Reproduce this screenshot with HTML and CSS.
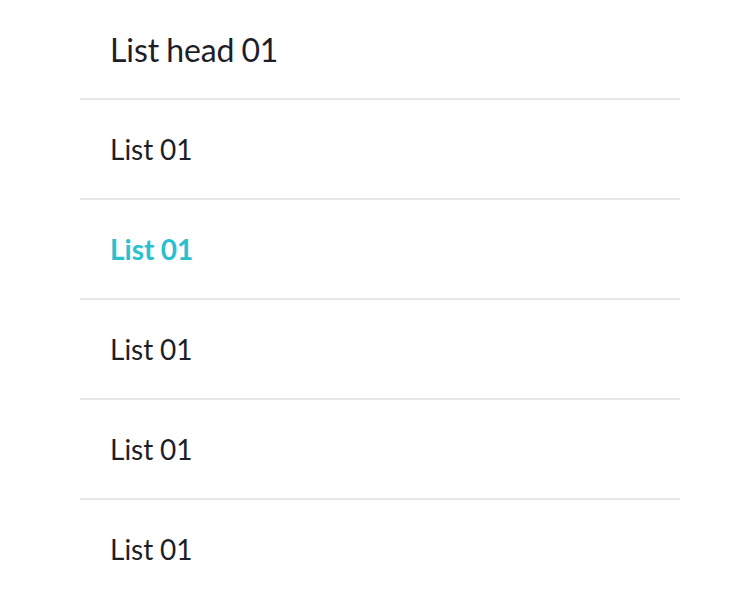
FILE: index.html
```html
<!DOCTYPE html>
<html>
<head>
<meta charset="utf-8">
<link rel="stylesheet" href="styles.css">
</head>
<body>
<ul class="list">
  <li class="list-head">List head 01</li>
  <li class="list-item">List 01</li>
  <li class="list-item active">List 01</li>
  <li class="list-item">List 01</li>
  <li class="list-item">List 01</li>
  <li class="list-item last">List 01</li>
</ul>
</body>
</html>
```

FILE: styles.css
```css
html, body {
  margin: 0;
  padding: 0;
  background: #fff;
}
body {
  font-family: Lato, "Noto Sans", sans-serif;
  color: #1e1e28;
}
.list {
  list-style: none;
  margin: 0 0 0 80px;
  padding: 0;
  width: 600px;
}
.list-head,
.list-item {
  height: 98px;
  display: flex;
  align-items: center;
  padding-left: 30px;
  border-bottom: 2px solid #e6e6ea;
}
.list-head {
  font-size: 32px;
  letter-spacing: -0.1px;
  word-spacing: -1px;
}
.list-item {
  font-size: 28px;
  word-spacing: -0.5px;
}
.list-item.active {
  color: #2bbfcf;
  font-weight: 700;
}
.list-item.last {
  border-bottom: none;
}
```
